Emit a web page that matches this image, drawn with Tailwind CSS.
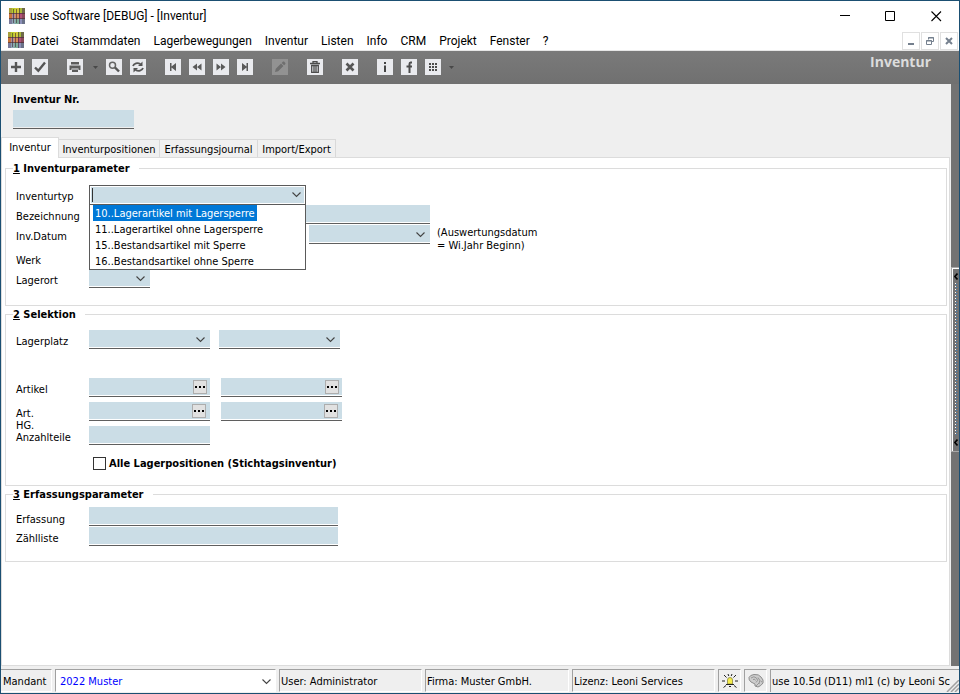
<!DOCTYPE html>
<html lang="de">
<head>
<meta charset="utf-8">
<title>use Software [DEBUG] - [Inventur]</title>
<script src="https://cdn.jsdelivr.net/npm/@tailwindcss/browser@4"></script>
</head>
<body class="flex h-screen flex-col border border-[#1b4f72] bg-[#efefef] font-['DejaVu_Sans_Condensed','DejaVu_Sans',sans-serif] text-[11px] leading-[14px] text-black">

<svg class="hidden" aria-hidden="true">
  <symbol id="logo" viewBox="0 0 16 16">
    <path fill="#8a4a4a" d="M0 0h16v16H0z"/>
    <path fill="#a9a03c" d="M0 0h3v5H0z"/><path fill="#b9cc2c" d="M3 0h3v5H3z"/><path fill="#d3c93a" d="M6 0h4v5H6z"/><path fill="#a8b83a" d="M10 0h3v5h-3z"/><path fill="#6f6a4a" d="M13 0h3v5h-3z"/>
    <path fill="#c8743a" d="M0 5h3v6H0z"/><path fill="#b08a9a" d="M3 5h3v6H3z"/><path fill="#d98a5a" d="M6 5h4v6H6z"/><path fill="#b3507a" d="M10 5h3v6h-3z"/><path fill="#8a4a5a" d="M13 5h3v6h-3z"/>
    <path fill="#7a7a9a" d="M0 11h3v5H0z"/><path fill="#8fa5b5" d="M3 11h3v5H3z"/><path fill="#7fae9d" d="M6 11h4v5H6z"/><path fill="#8b8fb8" d="M10 11h3v5h-3z"/><path fill="#6a7288" d="M13 11h3v5h-3z"/>
    <path stroke="#3a2a30" stroke-opacity=".6" d="M0 5.500h16M0 10.500h16M4.500 1v14M7.500 1v14M10.500 0v16" fill="none"/>
  </symbol>
  <symbol id="chev" viewBox="0 0 9 6"><path d="M.5.5 4.500 4.500 8.500.5" fill="none" stroke="#444" stroke-width="1.100"/></symbol>
  <symbol id="dots" viewBox="0 0 10 2"><path d="M0 0h2v2H0zM4 0h2v2H4zM8 0h2v2H8z"/></symbol>
</svg>

<header class="bg-white font-['Roboto','Open_Sans',sans-serif] text-[12px] leading-4">
  <div class="flex h-[30px] items-center pl-2">
    <svg class="size-4"><use href="#logo"/></svg>
    <h1 class="ml-[5px] flex-1">use Software [DEBUG] - [Inventur]</h1>
    <button aria-label="Minimieren" class="flex h-7 w-[46px] items-center justify-center"><svg class="size-[11px]" viewBox="0 0 11 11"><path d="M1 4.500h10" stroke="#000"/></svg></button>
    <button aria-label="Maximieren" class="flex h-7 w-[46px] items-center justify-center"><svg class="size-[11px]" viewBox="0 0 11 11"><path d="M.5.5h9v9h-9z" fill="none" stroke="#000"/></svg></button>
    <button aria-label="Schließen" class="flex h-7 w-[46px] items-center justify-center"><svg class="size-[11px]" viewBox="0 0 11 11"><path d="m.5.5 9.500 9.500m0-9.500-9.500 9.500" stroke="#000" stroke-width="1.100"/></svg></button>
  </div>
  <div class="flex h-[20px] items-end border-b border-[#e6e6e6] pl-[7px] pr-px">
    <svg class="mb-[2px] size-4"><use href="#logo"/></svg>
    <nav class="mb-px ml-[7px] flex flex-1 gap-[13px] whitespace-nowrap">
      <a href="#">Datei</a><a href="#">Stammdaten</a><a href="#">Lagerbewegungen</a><a href="#">Inventur</a><a href="#">Listen</a><a href="#">Info</a><a href="#">CRM</a><a href="#">Projekt</a><a href="#">Fenster</a><a href="#">?</a>
    </nav>
    <div class="flex gap-px">
      <button aria-label="Fenster minimieren" class="flex h-[18px] w-[18px] items-center justify-center border border-[#e0e0e0]"><svg class="size-2" viewBox="0 0 8 8"><path d="M1 6h6v2H1z" fill="#75808e"/></svg></button>
      <button aria-label="Fenster wiederherstellen" class="flex h-[18px] w-[18px] items-center justify-center border border-[#e0e0e0]"><svg class="size-2" viewBox="0 0 8 8"><path d="M2.500 2.500V.5h5v4h-2M2 1h6M.5 3.500h5v4h-5zM0 4h6" fill="none" stroke="#75808e"/></svg></button>
      <button aria-label="Fenster schließen" class="flex h-[18px] w-[18px] items-center justify-center border border-[#e0e0e0]"><svg class="size-2" viewBox="0 0 8 8"><path d="m1 1 6 6m0-6L1 7" stroke="#75808e" stroke-width="2"/></svg></button>
    </div>
  </div>
</header>

<div class="flex h-[33px] shrink-0 justify-between bg-linear-to-b from-[#7a7a7a] to-[#707070] pl-[7px] pr-7">
  <div class="flex items-center gap-[19px] pb-px">
    <div class="flex gap-2">
      <button aria-label="Neu" class="size-4 bg-[#e9eaee]"><svg viewBox="0 0 16 16"><path d="M8 3v10M3 8h10" stroke="#555" stroke-width="2.400"/></svg></button>
      <button aria-label="Übernehmen" class="size-4 bg-[#e9eaee]"><svg viewBox="0 0 16 16"><path d="m3 8.500 3.300 3.200L13 3.500" fill="none" stroke="#555" stroke-width="2.400"/></svg></button>
    </div>
    <div class="flex items-center gap-2">
      <button aria-label="Drucken" class="size-4 bg-[#e9eaee]"><svg viewBox="0 0 16 16"><path d="M4 3h8v2.500H4zM2.500 6.500h11V11h-2V9.500h-7V11h-2zM5 10.500h6V13H5z" fill="#5c5c5c"/></svg></button>
      <button aria-label="Druckoptionen" class="ml-[2px] w-[5px]"><svg class="h-[3px] w-[5px]" viewBox="0 0 5 3"><path d="M0 0h5L2.500 3z" fill="#484848"/></svg></button>
      <button aria-label="Suchen" class="size-4 bg-[#e9eaee]"><svg viewBox="0 0 16 16"><circle cx="6.500" cy="6.300" r="3" fill="none" stroke="#666" stroke-width="1.500"/><path d="m9 8.500 4 4" stroke="#555" stroke-width="2.400"/></svg></button>
      <button aria-label="Aktualisieren" class="size-4 bg-[#e9eaee]"><svg viewBox="0 0 16 16"><path d="M3 7C4 4 7.500 3.500 10.500 5M13 9c-1 3-4.500 3.500-7.500 2" fill="none" stroke="#555" stroke-width="1.800"/><path d="M12.500 2.500v4.500H8zM3.500 13.500V9H8z" fill="#555"/></svg></button>
    </div>
    <div class="flex gap-2">
      <button aria-label="Erster" class="size-4 bg-[#e9eaee]"><svg viewBox="0 0 16 16"><path d="M5 4h1.500v3.500L11 4v8L6.500 8.500V12H5z" fill="#5a5a5a"/></svg></button>
      <button aria-label="Zurück" class="size-4 bg-[#e9eaee]"><svg viewBox="0 0 16 16"><path d="M8 4.500v7L3.500 8zM12.500 4.500v7L8 8z" fill="#5a5a5a"/></svg></button>
      <button aria-label="Vor" class="size-4 bg-[#e9eaee]"><svg viewBox="0 0 16 16"><path d="M3.500 4.500v7L8 8zM8 4.500v7L12.500 8z" fill="#5a5a5a"/></svg></button>
      <button aria-label="Letzter" class="size-4 bg-[#e9eaee]"><svg viewBox="0 0 16 16"><path d="M11 4H9.500v3.500L5 4v8l4.500-3.500V12H11z" fill="#5a5a5a"/></svg></button>
    </div>
    <button aria-label="Bearbeiten" disabled class="size-4 bg-[#929292]"><svg viewBox="0 0 16 16"><path d="m3 13 .8-3.200L9 4.600l2.400 2.400-5.200 5.200zM9.700 3.900l1.300-1.300h1L13.400 4v1l-1.300 1.300z" fill="#6e6e6e"/></svg></button>
    <button aria-label="Löschen" class="size-4 bg-[#e9eaee]"><svg viewBox="0 0 16 16"><path d="M6 4V2.700h4V4M3 4.500h10M4.700 6.500h6.600v6.800H4.700zM7 7v6M9 7v6" fill="none" stroke="#4c4c4c" stroke-width="1.300"/></svg></button>
    <button aria-label="Abbrechen" class="size-4 bg-[#e9eaee]"><svg viewBox="0 0 16 16"><path d="m4.500 4.500 7 7m0-7-7 7" stroke="#555" stroke-width="2.600"/></svg></button>
    <div class="flex items-center gap-2">
      <button aria-label="Information" class="size-4 bg-[#e9eaee]"><svg viewBox="0 0 16 16"><path d="M7 3h2v2H7zM7 6.500h2V13H7z" fill="#444"/></svg></button>
      <button aria-label="Facebook" class="size-4 bg-[#e9eaee]"><svg viewBox="0 0 16 16"><path d="M11 3.500H9.500Q8.500 3.500 8.500 5v9M5.500 7.500H11" fill="none" stroke="#4c4c4c" stroke-width="2"/></svg></button>
      <button aria-label="Module" class="size-4 bg-[#e9eaee]"><svg viewBox="0 0 16 16"><path d="M4 5h8M4 8h8M4 11h8" stroke="#4c4c4c" stroke-width="2" stroke-dasharray="2 1"/></svg></button>
      <button aria-label="Moduloptionen" class="w-[5px]"><svg class="h-[3px] w-[5px]" viewBox="0 0 5 3"><path d="M0 0h5L2.500 3z" fill="#484848"/></svg></button>
    </div>
  </div>
  <h2 class="pt-[2px] font-['Open_Sans',sans-serif] text-[14px] font-bold leading-[18px] text-[#dcdcdc]">Inventur</h2>
</div>

<div class="flex min-h-0 flex-1">
  <main class="flex min-w-0 flex-1 flex-col">
    <div class="h-[53px] pl-3 pt-[9px]">
      <label for="nr" class="block font-bold">Inventur Nr.</label>
      <input id="nr" class="mt-[3px] block h-[17px] w-[121px] bg-[#cbdde6] shadow-[0_1px_0_#efefef,0_2px_0_#5f5f5f]">
    </div>
    <div role="tablist" class="flex h-5 shrink-0 items-end">
      <button role="tab" aria-selected="true" class="z-10 -mb-px h-[21px] w-[58px] border border-b-0 border-[#dcdcdc] bg-white pb-px">Inventur</button>
      <button role="tab" class="h-[18px] w-[101px] border-t border-r border-[#d9d9d9] bg-[#f0f0f0] pt-[2px]">Inventurpositionen</button>
      <button role="tab" class="h-[18px] w-[98px] border-t border-r border-[#d9d9d9] bg-[#f0f0f0] pt-[2px]">Erfassungsjournal</button>
      <button role="tab" class="h-[18px] w-[78px] border-t border-r border-[#d9d9d9] bg-[#f0f0f0] pt-[2px]">Import/Export</button>
    </div>
    <div class="mr-px flex-1 border border-[#dcdcdc] bg-white pl-[3px] pr-[2px] pt-[2px]">
      <fieldset class="border border-[#dcdcdc] pb-4 pl-[10px] pt-[9px]">
        <legend class="-ml-[3px] pr-[9px] pt-[2px] font-bold leading-[14px]"><u>1</u> Inventurparameter</legend>
        <div class="flex h-5">
          <label for="typ" class="w-[73px] pt-[5px]">Inventurtyp</label>
          <div class="relative w-[217px]">
            <div class="grid h-5 items-center border border-[#5a5a5a] bg-white p-px">
              <input id="typ" role="combobox" aria-expanded="true" aria-controls="typliste" class="col-start-1 row-start-1 h-4 w-full bg-[#cbdde6]">
              <span class="col-start-1 row-start-1 ml-px h-[14px] w-px bg-[#333]"></span>
              <svg class="col-start-1 row-start-1 mr-[3px] h-[6px] w-[9px] justify-self-end"><use href="#chev"/></svg>
            </div>
            <ul id="typliste" role="listbox" class="absolute left-0 top-[19px] z-20 w-full border border-[#5a5a5a] bg-white pl-[3px] leading-[15px] whitespace-nowrap">
              <li role="option" aria-selected="true" class="w-fit bg-[#0078d7] px-[2px] pt-px text-white">10..Lagerartikel mit Lagersperre</li>
              <li role="option" class="px-[2px] pt-px">11..Lagerartikel ohne Lagersperre</li>
              <li role="option" class="px-[2px] pt-px">15..Bestandsartikel mit Sperre</li>
              <li role="option" class="px-[2px] pt-px">16..Bestandsartikel ohne Sperre</li>
            </ul>
          </div>
        </div>
        <div class="flex h-5">
          <label for="bez" class="w-[73px] pt-[5px]">Bezeichnung</label>
          <input id="bez" class="h-[17px] w-[341px] bg-[#cbdde6] shadow-[0_1px_0_#fff,0_2px_0_#5f5f5f]">
        </div>
        <div class="flex h-5">
          <label for="datum" class="w-[73px] pt-[5px]">Inv.Datum</label>
          <input id="datum" class="h-[17px] w-[121px] bg-[#cbdde6] shadow-[0_1px_0_#fff,0_2px_0_#5f5f5f]">
          <div class="ml-[99px] grid h-[17px] w-[121px] items-center">
            <select aria-label="Auswertungsdatum" class="col-start-1 row-start-1 h-[17px] w-full appearance-none bg-[#cbdde6] shadow-[0_1px_0_#fff,0_2px_0_#5f5f5f]"></select>
            <svg class="pointer-events-none col-start-1 row-start-1 mr-[5px] mt-[2px] h-[6px] w-[9px] justify-self-end"><use href="#chev"/></svg>
          </div>
          <p class="-mb-2 ml-[7px] pt-px leading-[13px]">(Auswertungsdatum<br>= Wi.Jahr Beginn)</p>
        </div>
        <div class="mt-1 flex h-5">
          <label for="werk" class="w-[73px] pt-[5px]">Werk</label>
          <input id="werk" class="h-[17px] w-[61px] bg-[#cbdde6] shadow-[0_1px_0_#fff,0_2px_0_#5f5f5f]">
        </div>
        <div class="flex h-5">
          <label for="ort" class="w-[73px] pt-[5px]">Lagerort</label>
          <div class="grid h-[17px] w-[61px] items-center">
            <select id="ort" class="col-start-1 row-start-1 h-[17px] w-full appearance-none bg-[#cbdde6] shadow-[0_1px_0_#fff,0_2px_0_#5f5f5f]"></select>
            <svg class="pointer-events-none col-start-1 row-start-1 mr-[5px] mt-[2px] h-[6px] w-[9px] justify-self-end"><use href="#chev"/></svg>
          </div>
        </div>
      </fieldset>

      <fieldset class="border border-[#dcdcdc] pb-[14px] pl-[10px] pt-2">
        <legend class="-ml-[3px] pr-[9px] pt-[2px] font-bold leading-[14px]"><u>2</u> Selektion</legend>
        <div class="flex h-12">
          <label for="platz" class="w-[73px] pt-[5px]">Lagerplatz</label>
          <div class="grid h-[17px] w-[121px] items-center">
            <select id="platz" class="col-start-1 row-start-1 h-[17px] w-full appearance-none bg-[#cbdde6] shadow-[0_1px_0_#fff,0_2px_0_#5f5f5f]"></select>
            <svg class="pointer-events-none col-start-1 row-start-1 mr-[5px] mt-[2px] h-[6px] w-[9px] justify-self-end"><use href="#chev"/></svg>
          </div>
          <div class="ml-[9px] grid h-[17px] w-[121px] items-center">
            <select aria-label="Lagerplatz bis" class="col-start-1 row-start-1 h-[17px] w-full appearance-none bg-[#cbdde6] shadow-[0_1px_0_#fff,0_2px_0_#5f5f5f]"></select>
            <svg class="pointer-events-none col-start-1 row-start-1 mr-[5px] mt-[2px] h-[6px] w-[9px] justify-self-end"><use href="#chev"/></svg>
          </div>
        </div>
        <div class="flex h-6">
          <label for="art" class="w-[73px] pt-[5px]">Artikel</label>
          <div class="flex h-[17px] w-[121px] bg-[#cbdde6] pr-[3px] shadow-[0_1px_0_#fff,0_2px_0_#5f5f5f]">
            <input id="art" class="min-w-0 flex-1"><button aria-label="Artikel wählen" class="mt-[2px] flex size-[14px] items-center justify-center border border-[#adadad] bg-[#e1e1e1]"><svg class="h-[2px] w-[10px]"><use href="#dots"/></svg></button>
          </div>
          <div class="ml-[11px] flex h-[17px] w-[121px] bg-[#cbdde6] pr-[3px] shadow-[0_1px_0_#fff,0_2px_0_#5f5f5f]">
            <input aria-label="Artikel bis" class="min-w-0 flex-1"><button aria-label="Artikel bis wählen" class="mt-[2px] flex size-[14px] items-center justify-center border border-[#adadad] bg-[#e1e1e1]"><svg class="h-[2px] w-[10px]"><use href="#dots"/></svg></button>
          </div>
        </div>
        <div class="flex h-6">
          <label for="hg" class="w-[73px] pt-[6px] leading-[12px]">Art.<br>HG.</label>
          <div class="flex h-[17px] w-[121px] bg-[#cbdde6] pr-1 shadow-[0_1px_0_#fff,0_2px_0_#5f5f5f]">
            <input id="hg" class="min-w-0 flex-1"><button aria-label="Hauptgruppe wählen" class="mt-[2px] flex size-[14px] items-center justify-center border border-[#adadad] bg-[#e1e1e1]"><svg class="h-[2px] w-[10px]"><use href="#dots"/></svg></button>
          </div>
          <div class="ml-[11px] flex h-[17px] w-[121px] bg-[#cbdde6] pr-1 shadow-[0_1px_0_#fff,0_2px_0_#5f5f5f]">
            <input aria-label="Hauptgruppe bis" class="min-w-0 flex-1"><button aria-label="Hauptgruppe bis wählen" class="mt-[2px] flex size-[14px] items-center justify-center border border-[#adadad] bg-[#e1e1e1]"><svg class="h-[2px] w-[10px]"><use href="#dots"/></svg></button>
          </div>
        </div>
        <div class="flex h-[30px]">
          <label for="anz" class="w-[73px] pt-[6px] leading-[12px]">Anzahlteile</label>
          <input id="anz" class="h-[17px] w-[121px] bg-[#cbdde6] shadow-[0_1px_0_#fff,0_2px_0_#5f5f5f]">
        </div>
        <label class="ml-[77px] flex h-[15px] w-fit items-center gap-[3px] font-bold"><input type="checkbox" class="size-[13px] appearance-none border border-[#333] bg-white">Alle Lagerpositionen (Stichtagsinventur)</label>
      </fieldset>

      <fieldset class="border border-[#dcdcdc] pb-[14px] pl-[10px] pt-[5px]">
        <legend class="-ml-[3px] pr-[9px] pt-[2px] font-bold leading-[14px]"><u>3</u> Erfassungsparameter</legend>
        <div class="flex h-5">
          <label for="erf" class="w-[73px] pt-[6px]">Erfassung</label>
          <input id="erf" class="h-[17px] w-[249px] bg-[#cbdde6] shadow-[0_1px_0_#fff,0_2px_0_#5f5f5f]">
        </div>
        <div class="flex h-5">
          <label for="liste" class="w-[73px] pt-[5px]">Zählliste</label>
          <input id="liste" class="h-[17px] w-[249px] bg-[#cbdde6] shadow-[0_1px_0_#fff,0_2px_0_#5f5f5f]">
        </div>
      </fieldset>
    </div>
  </main>
  <aside class="flex w-2 flex-col justify-center bg-[#737373] pb-8">
    <button aria-label="Seitenleiste öffnen" class="flex h-[185px] flex-col items-center justify-between border border-r-0 border-[#a8a8a8] py-[5px] shadow-[inset_1px_1px_0_#fff]">
      <svg class="h-[7px] w-[4px]" viewBox="0 0 4 7"><path d="M3.500.5.8 3.500l2.700 3" fill="none" stroke="#000" stroke-width="1.600"/></svg>
      <svg class="h-[153px] w-[3px]"><path d="M1.500 0v153" stroke="#fff" stroke-width="1" stroke-dasharray="1 2"/><path d="M2.500 1v152" stroke="#3f7fb5" stroke-width="1" stroke-dasharray="1 2"/></svg>
      <svg class="h-[7px] w-[4px]" viewBox="0 0 4 7"><path d="M3.500.5.8 3.500l2.700 3" fill="none" stroke="#000" stroke-width="1.600"/></svg>
    </button>
  </aside>
</div>

<footer class="flex h-[27px] shrink-0 gap-[3px] whitespace-nowrap pb-px pt-[3px] leading-[22px]">
  <label for="mandant" class="w-[51px] border border-[#a0a0a0] border-r-white border-b-white border-l-0 pl-[2px] pt-px">Mandant</label>
  <div class="grid w-[221px] items-center border border-[#a0a0a0] border-r-white border-b-white bg-white">
    <select id="mandant" class="col-start-1 row-start-1 h-5 w-full appearance-none pl-1 text-[#0000ff]"><option>2022 Muster</option></select>
    <svg class="pointer-events-none col-start-1 row-start-1 mr-1 mt-[2px] h-[6px] w-[9px] justify-self-end"><use href="#chev"/></svg>
  </div>
  <p class="w-[143px] border border-[#a0a0a0] border-r-white border-b-white pl-px pt-px">User: Administrator</p>
  <p class="w-[144px] border border-[#a0a0a0] border-r-white border-b-white pl-px pt-px">Firma: Muster GmbH.</p>
  <p class="w-[143px] border border-[#a0a0a0] border-r-white border-b-white pl-px pt-px">Lizenz: Leoni Services</p>
  <p class="flex w-[23px] items-center justify-center border border-[#a0a0a0] border-r-white border-b-white"><svg class="size-4" viewBox="0 0 16 16"><path d="M5.500 11V7Q5.500 4.500 8 4.500T10.500 7v4z" fill="#f4ec4a" stroke="#8b8640" stroke-width=".8"/><path d="M4 11.500h8" stroke="#222"/><path d="m2 2 2.500 2.500M14 2l-2.500 2.500M0 8h3M13 8h3M1.500 14.500 4 12.500M14.500 14.500 12 12.500M6 1l.8 2M10 1l-.8 2M7 13.500h2" stroke="#222" fill="none"/></svg></p>
  <p class="flex w-[23px] items-center justify-center border border-[#a0a0a0] border-r-white border-b-white"><svg class="size-4" viewBox="0 0 16 16"><path d="M1 4.500Q2 2 6 1.500q5-.5 7 2.500 3 3 2 6-2 3-5 4l-3-1v-2L3 9Q.5 7 1 4.500z" fill="#cdcdcd" stroke="#8c8c8c"/><path d="M3 5q3-2.500 5.500 0T8 9.500M5 6.500q2-1 2.500 1M10 4.500q3 2.500 1 6.500M8 13l3-3M12.500 8l1.500 1" fill="none" stroke="#909090" stroke-width=".9"/></svg></p>
  <div class="grid min-w-0 flex-1 border-l border-t border-[#a0a0a0] pl-px">
    <p class="col-start-1 row-start-1 min-w-0 overflow-hidden pt-px">use 10.5d (D11) ml1 (c) by Leoni Sc</p>
    <svg class="col-start-1 row-start-1 h-3 w-[13px] self-end justify-self-end" viewBox="0 0 13 12"><path d="M1 12 13 0M5 12l8-8M9 12l4-4" stroke="#a0a0a0" stroke-width="1.500"/></svg>
  </div>
</footer>
</body>
</html>
